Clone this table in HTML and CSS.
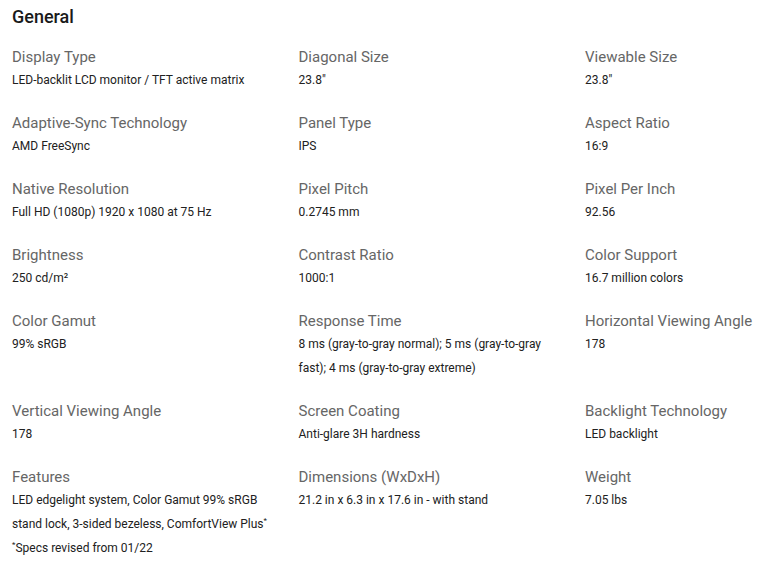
FILE: index.html
```html
<!DOCTYPE html>
<html>
<head>
<meta charset="utf-8">
<link rel="stylesheet" href="styles.css">
</head>
<body>
<section class="specs">
  <h2 class="title">General</h2>
  <div class="grid">
    <div class="cell"><div class="label">Display Type</div><div class="value">LED-backlit LCD monitor / TFT active matrix</div></div>
    <div class="cell"><div class="label">Diagonal Size</div><div class="value">23.8"</div></div>
    <div class="cell"><div class="label">Viewable Size</div><div class="value">23.8"</div></div>

    <div class="cell"><div class="label">Adaptive-Sync Technology</div><div class="value">AMD FreeSync</div></div>
    <div class="cell"><div class="label">Panel Type</div><div class="value">IPS</div></div>
    <div class="cell"><div class="label">Aspect Ratio</div><div class="value">16:9</div></div>

    <div class="cell"><div class="label">Native Resolution</div><div class="value">Full HD (1080p) 1920 x 1080 at 75 Hz</div></div>
    <div class="cell"><div class="label">Pixel Pitch</div><div class="value">0.2745 mm</div></div>
    <div class="cell"><div class="label">Pixel Per Inch</div><div class="value">92.56</div></div>

    <div class="cell"><div class="label">Brightness</div><div class="value">250 cd/m²</div></div>
    <div class="cell"><div class="label">Contrast Ratio</div><div class="value">1000:1</div></div>
    <div class="cell"><div class="label">Color Support</div><div class="value">16.7 million colors</div></div>

    <div class="cell"><div class="label">Color Gamut</div><div class="value">99% sRGB</div></div>
    <div class="cell"><div class="label">Response Time</div><div class="value">8 ms (gray-to-gray normal); 5 ms (gray-to-gray fast); 4 ms (gray-to-gray extreme)</div></div>
    <div class="cell"><div class="label">Horizontal Viewing Angle</div><div class="value">178</div></div>

    <div class="cell"><div class="label">Vertical Viewing Angle</div><div class="value">178</div></div>
    <div class="cell"><div class="label">Screen Coating</div><div class="value">Anti-glare 3H hardness</div></div>
    <div class="cell"><div class="label">Backlight Technology</div><div class="value">LED backlight</div></div>

    <div class="cell"><div class="label">Features</div><div class="value">LED edgelight system, Color Gamut 99% sRGB stand lock, 3-sided bezeless, ComfortView Plus<sup>*</sup><br><sup>*</sup>Specs revised from 01/22</div></div>
    <div class="cell"><div class="label">Dimensions (WxDxH)</div><div class="value">21.2 in x 6.3 in x 17.6 in - with stand</div></div>
    <div class="cell"><div class="label">Weight</div><div class="value">7.05 lbs</div></div>
  </div>
</section>
</body>
</html>
```
FILE: styles.css
```css
html, body {
  margin: 0;
  padding: 0;
  background: #fff;
}
body {
  font-family: Roboto, "Liberation Sans", Arial, sans-serif;
  color: #212121;
  overflow: hidden;
}
.specs {
  padding: 5px 12px 0 12px;
}
.title {
  margin: 0;
  font-size: 18px;
  font-weight: 500;
  line-height: 24px;
  color: #1a1a1a;
}
.grid {
  margin-top: 17px;
  display: grid;
  grid-template-columns: 266px 266px 1fr;
  column-gap: 20.5px;
  row-gap: 20px;
}
.label {
  font-size: 15px;
  line-height: 22px;
  color: #666;
}
.value {
  font-size: 12px;
  line-height: 24px;
  color: #212121;
}
.value sup {
  font-size: 8px;
  line-height: 0;
  vertical-align: 5px;
}
```
